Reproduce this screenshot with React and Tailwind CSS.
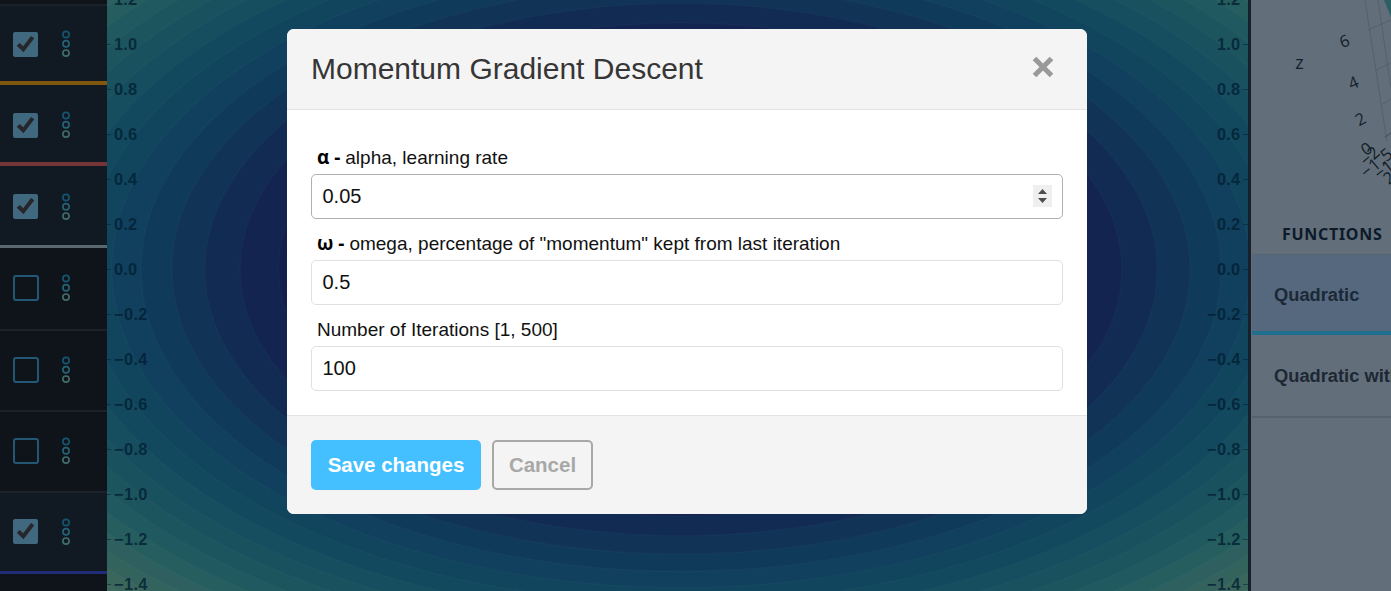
import React from "react";

const palette = [
  [0, 19, 26, 76], [4.5, 19, 31, 77], [5.5, 18, 36, 79], [6.5, 17, 43, 82], [7.5, 17, 51, 86],
  [8.5, 16, 58, 90], [9.5, 16, 64, 93], [11, 17, 71, 94], [13, 24, 79, 95], [16, 34, 91, 95], [19, 55, 100, 92], [23, 76, 112, 91],
];

function bandColor(n) {
  for (let i = 1; i < palette.length; i++) {
    const a = palette[i - 1];
    const b = palette[i];
    if (n <= b[0]) {
      const t = (n - a[0]) / (b[0] - a[0]);
      return "rgb(" + [1, 2, 3].map((k) => Math.round(a[k] + (b[k] - a[k]) * t)).join(",") + ")";
    }
  }
  return "rgb(76,112,91)";
}

const levels = Array.from({ length: 22 }, (_, i) => 22 - i);
const ticks = ["1.2", "1.0", "0.8", "0.6", "0.4", "0.2", "0.0", "−0.2", "−0.4", "−0.6", "−0.8", "−1.0", "−1.2", "−1.4"];

function Contours() {
  return (
    <svg className="block h-[591px] w-[1141px]" viewBox="107 0 1141 591">
      <rect x="107" y="0" width="1141" height="591" fill={bandColor(22.5)} />
      {levels.map((n) => (
        <ellipse key={n} cx="681" cy="269.5" rx={180 * Math.sqrt(n)} ry={100.6 * Math.sqrt(n)}
          fill={bandColor(n - 0.5)} stroke="#ffffff" strokeOpacity="0.025" strokeWidth="1.5" />
      ))}
      <g fontFamily="Liberation Sans, Arial, sans-serif" fontWeight="700" fontSize="16.4" fill="#001c30" fillOpacity="0.75">
        {ticks.map((t, i) => (
          <g key={t}>
            <rect x="107" y={-1 + i * 45} width="4" height="1" fillOpacity="0.5" />
            <text x="114" y={5 + i * 45} textLength={t.length > 3 ? 33.4 : 23.2}>{t}</text>
            <text x={t.length > 3 ? 1207 : 1217} y={5 + i * 45} textLength={t.length > 3 ? 33.4 : 23.2}>{t}</text>
            <rect x="1243" y={-1 + i * 45} width="5" height="1" fillOpacity="0.5" />
          </g>
        ))}
      </g>
    </svg>
  );
}

function Dots() {
  return (
    <svg className="block h-[28px] w-[10px]" viewBox="0 0 10 28" fill="none" strokeWidth="1.7">
      <circle cx="5" cy="4.5" r="3.1" stroke="#165470" />
      <circle cx="5" cy="13.8" r="3.1" stroke="#256273" />
      <circle cx="5" cy="23.1" r="3.1" stroke="#426c6b" />
    </svg>
  );
}

function Check({ on }) {
  if (!on) return <div className="mr-px h-[26px] w-[26px] rounded-[3px] border-2 border-[#235776]" />;
  return (
    <div className="mr-[2px] flex h-[25px] w-[25px] items-center justify-center rounded-[2px] bg-[#40687f]">
      <svg className="h-[25px] w-[25px]" viewBox="0 0 25 25">
        <path d="M3.7 13.8 L6.8 10.9 L10.2 14.3 L18 3.9 L21.3 6.2 L10.5 20.2 Z" fill="#27262b" />
      </svg>
    </div>
  );
}

function Row({ on, className }) {
  return (
    <div className={"flex shrink-0 items-center pl-[13px] " + (on ? "bg-[#111923] " : "bg-[#0f141b] ") + className}>
      <Check on={on} />
      <div className="ml-[21px]"><Dots /></div>
    </div>
  );
}

function Sidebar() {
  return (
    <div className="flex h-[591px] w-[107px] shrink-0 flex-col overflow-hidden bg-[#0f141b]">
      <div className="h-[6px] shrink-0 border-b-2 border-[#1c2129]" />
      <Row on className="h-[79px] border-b-4 border-[#80570f] pt-px" />
      <Row on className="h-[81px] border-b-4 border-[#753436] pt-[3px]" />
      <Row on className="h-[82px] border-b-[3px] border-[#59686e] pt-[2px]" />
      <Row className="h-[83px] border-b-2 border-[#1d2229] pb-px" />
      <Row className="h-[81px] border-b-2 border-[#1d2229] pb-px" />
      <Row className="h-[81px] border-b-2 border-[#1d2229] pb-px" />
      <Row on className="h-[81px] border-b-[3px] border-[#202d76] pb-px" />
    </div>
  );
}

function Surface() {
  return (
    <svg className="block h-[214px] w-[140px] shrink-0" viewBox="1251 0 140 214">
      <g fill="none" stroke="#4f5c68" strokeOpacity="0.7" strokeWidth="1">
        <path d="M1365 0 L1387 142 M1378 0 L1391 88 M1368 30 L1391 20 M1376 70 L1391 63 M1381 105 L1391 99" />
        <path d="M1385 137 L1391 133" stroke="#323d48" />
      </g>
      <path d="M1384 0 L1391 17 L1391 0 Z" fill="#2b5f63" />
      <g fontFamily="Open Sans, Noto Sans, sans-serif" fontSize="16.5" fill="#141e29" textAnchor="middle">
        <text x="1299.5" y="68.5" fontSize="18">z</text>
        <text transform="translate(1344.5 41.5) rotate(-20)" y="5.5">6</text>
        <text transform="translate(1353.5 83) rotate(-23)" y="5.5">4</text>
        <text transform="translate(1360.5 119.5) rotate(-28)" y="5.5">2</text>
        <text transform="translate(1366.5 149) rotate(-34)" y="5.5">0</text>
        <text transform="translate(1370 156.5) rotate(-42)" y="5.5" fontSize="17">−2</text>
        <text transform="translate(1377 163) rotate(-40)" y="5.5" fontSize="17" letterSpacing="0.7">−1.5</text>
        <text transform="translate(1384 170) rotate(-38)" y="5.5" fontSize="17">−1</text>
        <text transform="translate(1389 178) rotate(-38)" y="5.5">2</text>
      </g>
    </svg>
  );
}

function FunctionsPanel() {
  return (
    <div className="h-[591px] w-[143px] shrink-0 overflow-hidden border-l-[3px] border-[#17212c] bg-[#626e7a]">
      <Surface />
      <h2 className="h-[40px] pl-[31px] font-['Noto_Sans',sans-serif] text-[16px] leading-[40px] font-bold tracking-[0.7px] text-[#0d1a29]">FUNCTIONS</h2>
      <div className="ml-px flex h-[81px] items-center border-t border-b-4 border-t-[#536472] border-b-[#206f8f] bg-[#55687e] pt-[3px] pl-[22px] text-[18.3px] font-bold whitespace-nowrap text-[#1b2937]">
        Quadratic
      </div>
      <div className="ml-px flex h-[83px] items-center border-b-2 border-[#56626e] pl-[22px] text-[18.3px] font-bold whitespace-nowrap text-[#1d2834]">
        Quadratic with noise
      </div>
    </div>
  );
}

function Spinner() {
  return (
    <div className="mt-px flex h-[22px] w-[19px] items-center justify-center bg-[#efefef]">
      <svg className="h-[22px] w-[19px]" viewBox="0 0 19 22" fill="#4d4d4d">
        <path d="M5 9 L9.5 4 L14 9 Z M5 13 L9.5 18 L14 13 Z" />
      </svg>
    </div>
  );
}

function Field({ symbol, label, value, active }) {
  return (
    <div className="flex h-[86px] flex-col">
      <label className={"h-[34px] pl-[6px] text-[19px] whitespace-nowrap text-[#111] " + (symbol ? "leading-[34px]" : "leading-[35px]")}>
        {symbol && <b className="font-['Open_Sans','Noto_Sans',sans-serif] text-black">{symbol}{" - "}</b>}
        {label}
      </label>
      <div className={"flex h-[45px] items-center justify-between rounded-[5px] border bg-white pr-[10px] pb-[2px] pl-[10.5px] text-[20px] text-[#111] " + (active ? "border-[#b0b0b0]" : "border-[#dfdfdf]")}>
        <span>{value}</span>
        {active && <Spinner />}
      </div>
    </div>
  );
}

function Modal() {
  return (
    <div className="absolute top-[29px] left-[287px] flex h-[485px] w-[800px] flex-col overflow-hidden rounded-[7px] bg-white">
      <header className="flex h-[81px] shrink-0 items-center justify-between border-b border-[#e3e3e3] bg-[#f4f4f4] pr-[33px] pl-6">
        <h1 className="pb-[2px] text-[30px] text-[#363636]">Momentum Gradient Descent</h1>
        <svg className="mb-[5px] h-[22px] w-[22px]" viewBox="0 0 22 22" stroke="#999" strokeWidth="5">
          <path d="M2.5 2.5 L19.5 19.5 M19.5 2.5 L2.5 19.5" />
        </svg>
      </header>
      <main className="flex h-[305px] shrink-0 flex-col px-6 pt-[30px]">
        <Field symbol="α" label="alpha, learning rate" value="0.05" active />
        <Field symbol="ω" label={'omega, percentage of "momentum" kept from last iteration'} value="0.5" />
        <Field label="Number of Iterations [1, 500]" value="100" />
      </main>
      <footer className="flex flex-1 items-start gap-[11px] border-t border-[#e3e3e3] bg-[#f4f4f4] px-6 pt-6">
        <button className="h-[50px] w-[170px] rounded-[5px] bg-[#44bfff] text-[20.5px] font-bold text-white">Save changes</button>
        <button className="h-[50px] w-[101px] rounded-[5px] border-2 border-[#a8a8a8] text-[20.5px] font-bold text-[#a8a8a8]">Cancel</button>
      </footer>
    </div>
  );
}

export default function App() {
  return (
    <div className="relative flex h-[591px] w-[1391px] overflow-hidden font-['Liberation_Sans',Arial,sans-serif]">
      <Sidebar />
      <Contours />
      <FunctionsPanel />
      <Modal />
    </div>
  );
}
